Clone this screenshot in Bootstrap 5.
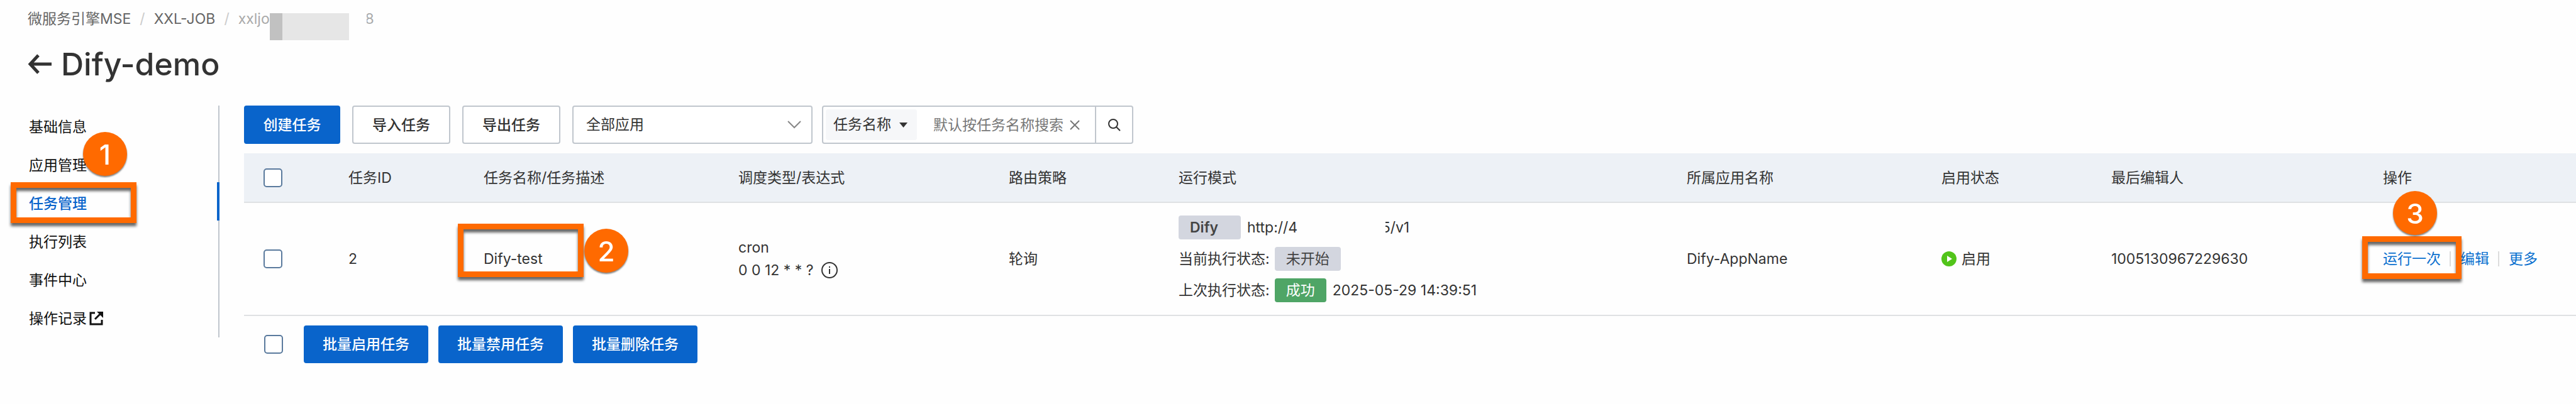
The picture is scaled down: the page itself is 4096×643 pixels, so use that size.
<!DOCTYPE html>
<html lang="zh-CN">
<head>
<meta charset="utf-8">
<meta name="viewport" content="width=device-width, initial-scale=1">
<title>Dify-demo - 任务管理</title>
<link href="https://cdn.jsdelivr.net/npm/bootstrap@5.3.0/dist/css/bootstrap.min.css" rel="stylesheet">
<style>
  :root {
    --ink: #333;
    --blue: #0964cb;
    --line: #c0c6cd;
    --rule: #dfe1e3;
    --orange: #ff6a00;
  }
  body {
    font-family: Inter, "Noto Sans CJK SC", sans-serif;
    font-size: 23px;
    line-height: 36px;
    color: var(--ink);
    background: #fefefe;
  }
  a { text-decoration: none; }

  .page-head { padding: 18px 44px 36px; }
  .crumbs {
    --bs-breadcrumb-divider-color: #ccc;
    --bs-breadcrumb-item-padding-x: 14px;
    --bs-breadcrumb-margin-bottom: 8px;
    line-height: 24px;
    height: 46px;
  }
  .crumbs a { color: #666; }
  .crumbs .active { color: #aaa; }
  .mask { width: 126px; height: 43px; margin-top: 3px; background: #e6e6e6; border-left: 20px solid #c1c1c1; }
  .cut-text { overflow: hidden; justify-content: flex-end; }
  .crumbs .cut-text { width: 12px; margin-left: 28px; }
  .page-title { font-size: 50px; line-height: 60px; font-weight: 500; gap: 14px; }
  .page-title a { color: inherit; line-height: 0; }

  .side { width: 349px; padding: 0; border-right: 2px solid var(--line); height: 369px; }
  .side-link { display: flex; align-items: center; gap: 4px; height: 61px; padding: 7px 0 0 46px; color: #111; position: relative; }
  .side-link.active { color: var(--blue); font-weight: 500; margin-right: -2px; border-right: 4px solid var(--blue); }

  .main-area { margin-left: 39px; min-width: 0; }
  .toolbar { height: 61px; margin-bottom: 15px; }
  .act { --bs-btn-font-size: 23px; --bs-btn-font-weight: 500; --bs-btn-line-height: 36px; --bs-btn-border-radius: 4px; --bs-btn-border-width: 2px; --bs-btn-padding-y: 0; --bs-btn-padding-x: 0; }
  .act-fill { --bs-btn-color: #fff; --bs-btn-bg: var(--blue); --bs-btn-border-color: var(--blue); }
  .act-line { --bs-btn-color: #333; --bs-btn-bg: #fff; --bs-btn-border-color: var(--line); }
  .toolbar .act { width: 156px; margin-right: 19px; }
  .toolbar .act-fill { width: 153px; }
  .field { border: 2px solid var(--line); border-radius: 4px; background-color: #fff; }
  .app-pick {
    width: 382px; margin-right: 15px; padding: 0 24px 0 20px; font-size: 23px; color: var(--ink);
    background-image: url("data:image/svg+xml,%3Csvg xmlns='http://www.w3.org/2000/svg' viewBox='0 0 22 13'%3E%3Cpath d='M1 1l10 10L21 1' fill='none' stroke='%23888' stroke-width='2'/%3E%3C/svg%3E");
    background-position: right 16px center; background-size: 22px 13px;
  }
  .finder { width: 495px; padding-left: 4px; }
  .finder-key {
    width: 145px; margin: 4px 0; padding: 0 0 0 12px; border: 0; border-radius: 4px; font-size: 23px; color: var(--ink);
    background-color: #f6f7f9;
    background-image: url("data:image/svg+xml,%3Csvg xmlns='http://www.w3.org/2000/svg' viewBox='0 0 13 8'%3E%3Cpath d='M0 0h13L6.5 8z' fill='%23333'/%3E%3C/svg%3E");
    background-position: right 15px center; background-size: 13px 8px;
  }
  .finder-text { flex: 1; min-width: 0; padding: 0 0 0 26px; border: 0; background: none; color: var(--ink); outline: 0; }
  .finder-text::placeholder { color: #777; opacity: 1; }
  .icon-btn { border: 0; background: none; padding: 0; display: flex; align-items: center; justify-content: center; }
  .finder-clear { width: 16px; margin: 0 24px 0 8px; }
  .finder-go { width: 59px; border-left: 2px solid var(--line); }

  .jobs { table-layout: fixed; margin: 0; --bs-table-color: #333; --bs-table-bg: transparent; }
  .jobs > :not(caption) > * > * { padding: 0 0 0 31px; border-bottom: 2px solid var(--rule); vertical-align: middle; }
  .jobs th { height: 78px; font-weight: 400; background: #edf1f6; }
  .jobs td { height: 180px; }
  .w-check { width: 135px; } .w-id { width: 215px; } .w-name { width: 405px; }
  .w-plan { width: 430px; } .w-state { width: 270px; } .w-editor { width: 432px; } .w-act { width: 338px; }
  .tick.form-check-input { width: 30px; height: 30px; margin: 0; border: 2px solid #5a7a9d; border-radius: 5px; background-color: #fff; display: block; }

  .modes { gap: 12px; }
  .mode-line { height: 38px; }
  .tag { height: 38px; padding: 0 18px; margin-right: 10px; border-radius: 4px; background: #d3d6df; color: #444; display: flex; align-items: center; }
  .tag-wide { width: 99px; font-weight: 600; }
  .tag-done { background: #4fa566; color: #fff; }
  .mode-line .cut-text { width: 38px; margin-left: 140px; }

  .info-icon { margin-left: 12px; }

  .ops a { color: #0a70cf; line-height: 24px; }
  .ops a + a { border-left: 2px solid #dcdcdc; padding-left: 15px; margin-left: 14px; }

  .batch { padding: 15px 0 0 32px; }
  .batch .act { height: 60px; margin-right: 16px; width: 198px; }
  .batch .tick { margin-right: 33px; }

  /* numbered guide marks laid over the page */
  .host { position: relative; }
  .frame { position: absolute; width: 200px; border: 9px solid var(--orange); filter: drop-shadow(0 5px 2px rgba(0,0,0,.6)); z-index: 2; pointer-events: none; }
  .step { position: absolute; width: 70px; height: 70px; border-radius: 50%; background: var(--orange); color: #fff; font: 500 44px/72px Inter, sans-serif; text-align: center; filter: drop-shadow(0 2px 1px rgba(0,0,0,.5)); z-index: 3; }
  .frame-nav { left: 17px; top: 0; height: 65px; }
  .step-nav { left: 132px; top: -80px; }
  .frame-name { left: -41px; top: -38px; height: 85px; }
  .step-name { left: 160px; top: -30px; }
  .frame-run { left: -33px; top: -24px; width: 158px; height: 68px; }
  .step-run { left: 16px; top: -96px; }
</style>
</head>
<body>
<header class="page-head">
  <nav aria-label="breadcrumb">
    <ol class="breadcrumb crumbs">
      <li class="breadcrumb-item"><a href="#">微服务引擎MSE</a></li>
      <li class="breadcrumb-item"><a href="#">XXL-JOB</a></li>
      <li class="breadcrumb-item active d-flex" aria-current="page">xxljo<span class="mask"></span><span class="cut-text d-flex">8</span></li>
    </ol>
  </nav>
  <h1 class="page-title d-flex align-items-center m-0">
    <a href="#" aria-label="返回"><svg width="39" height="32" viewBox="0 0 39 32" fill="none" stroke="currentColor" stroke-width="5"><path d="M38 16H4M17 2L4 16l13 14"/></svg></a>
    Dify-demo
  </h1>
</header>

<div class="d-flex align-items-start">
  <nav class="side flex-shrink-0">
    <a class="side-link" href="#">基础信息</a>
    <a class="side-link" href="#">应用管理</a>
    <a class="side-link active" href="#">任务管理<span class="frame frame-nav"></span><span class="step step-nav">1</span></a>
    <a class="side-link" href="#">执行列表</a>
    <a class="side-link" href="#">事件中心</a>
    <a class="side-link" href="#">操作记录<svg width="22" height="22" viewBox="0 0 22 22" fill="none" stroke="currentColor" stroke-width="3"><path d="M9 2H2v18h18v-7"/><path d="M9 12l8-8"/><path d="M12 0h10v10z" fill="currentColor" stroke="none"/></svg></a>
  </nav>

  <main class="main-area flex-grow-1">
    <div class="toolbar d-flex">
      <button type="button" class="btn act act-fill">创建任务</button>
      <button type="button" class="btn act act-line">导入任务</button>
      <button type="button" class="btn act act-line">导出任务</button>
      <select class="form-select field app-pick" aria-label="应用"><option>全部应用</option></select>
      <form class="field finder d-flex" role="search">
        <select class="form-select finder-key" aria-label="搜索字段"><option>任务名称</option></select>
        <input class="finder-text" type="text" placeholder="默认按任务名称搜索" aria-label="搜索内容">
        <button type="button" class="icon-btn finder-clear" aria-label="清除"><svg width="16" height="16" viewBox="0 0 16 16" fill="none" stroke="#777" stroke-width="2"><path d="M1 1l14 14M15 1L1 15"/></svg></button>
        <button type="button" class="icon-btn finder-go" aria-label="搜索"><svg width="20" height="20" viewBox="0 0 20 20" fill="none" stroke="#333" stroke-width="2"><circle cx="8" cy="8" r="7"/><path d="M13 13l6 6"/></svg></button>
      </form>
    </div>

    <table class="table jobs">
      <thead>
        <tr>
          <th class="w-check"><input type="checkbox" class="form-check-input tick" aria-label="全选"></th>
          <th class="w-id">任务ID</th>
          <th class="w-name">任务名称/任务描述</th>
          <th class="w-plan">调度类型/表达式</th>
          <th class="w-state">路由策略</th>
          <th>运行模式</th>
          <th class="w-name">所属应用名称</th>
          <th class="w-state">启用状态</th>
          <th class="w-editor">最后编辑人</th>
          <th class="w-act">操作</th>
        </tr>
      </thead>
      <tbody>
        <tr>
          <td><input type="checkbox" class="form-check-input tick" aria-label="选择任务 2"></td>
          <td>2</td>
          <td><div class="host">Dify-test<span class="frame frame-name"></span><span class="step step-name">2</span></div></td>
          <td>
            <div>cron</div>
            <div class="d-flex align-items-center">0 0 12 * * ?<svg class="info-icon" width="26" height="26" viewBox="0 0 26 26" fill="none" stroke="#333" stroke-width="2"><circle cx="13" cy="13" r="12"/><path d="M13 11v8M13 7v2"/></svg></div>
          </td>
          <td>轮询</td>
          <td>
            <div class="modes d-grid">
              <div class="mode-line d-flex align-items-center"><span class="tag tag-wide">Dify</span>http://4<span class="cut-text d-flex">5/v1</span></div>
              <div class="mode-line d-flex align-items-center">当前执行状态:<span class="tag ms-2">未开始</span></div>
              <div class="mode-line d-flex align-items-center">上次执行状态:<span class="tag tag-done ms-2">成功</span>2025-05-29 14:39:51</div>
            </div>
          </td>
          <td>Dify-AppName</td>
          <td><div class="d-flex align-items-center"><svg class="me-2" width="24" height="24" viewBox="0 0 24 24"><circle cx="12" cy="12" r="12" fill="#52c41a"/><path d="M9 7l8 5-8 5z" fill="#fff"/></svg>启用</div></td>
          <td>1005130967229630</td>
          <td><div class="ops host d-flex"><a href="#">运行一次</a><a href="#">编辑</a><a href="#">更多</a><span class="frame frame-run"></span><span class="step step-run">3</span></div></td>
        </tr>
      </tbody>
    </table>

    <div class="batch d-flex align-items-center">
      <input type="checkbox" class="form-check-input tick" aria-label="全选任务">
      <button type="button" class="btn act act-fill">批量启用任务</button>
      <button type="button" class="btn act act-fill">批量禁用任务</button>
      <button type="button" class="btn act act-fill">批量删除任务</button>
    </div>
  </main>
</div>
<script src="https://cdn.jsdelivr.net/npm/bootstrap@5.3.0/dist/js/bootstrap.bundle.min.js"></script>
</body>
</html>
